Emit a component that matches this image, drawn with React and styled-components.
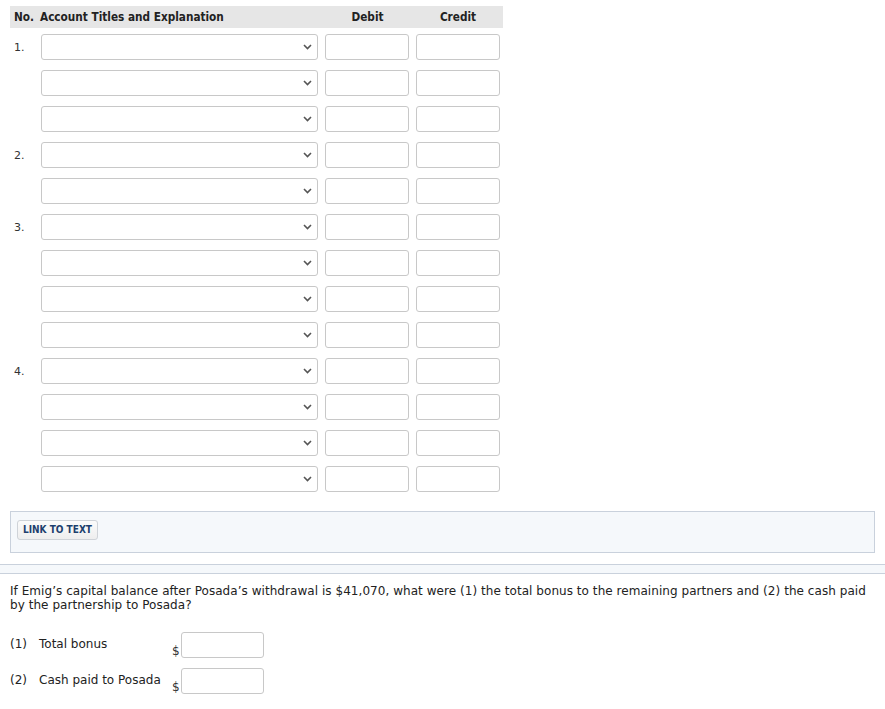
import React from 'react';
import styled, { createGlobalStyle } from 'styled-components';

const GlobalStyle = createGlobalStyle`
  body {
    margin: 0;
    background: #fff;
    font-family: "DejaVu Sans", Verdana, sans-serif;
    color: #333;
  }
`;

const Page = styled.div`
  padding-top: 6px;
`;

const Journal = styled.div`
  margin-left: 10px;
  width: 493px;
`;

const HeaderRow = styled.div`
  display: grid;
  grid-template-columns: 30px 282px 91px 90px;
  align-items: center;
  height: 22px;
  background: #e6e6e6;
  font-family: "DejaVu Sans Condensed", "DejaVu Sans", sans-serif;
  font-weight: bold;
  font-size: 11.7px;
  color: #222;
`;

const HeadCell = styled.div`
  padding-left: ${p => (p.first ? '4px' : '0')};
  text-align: ${p => (p.center ? 'center' : 'left')};
`;

const Body = styled.div`
  padding-top: 1px;
`;

const EntryRow = styled.div`
  display: grid;
  grid-template-columns: 31px 284px 91px 84px;
  height: 36px;
  align-items: start;
  padding-top: 5px;
  box-sizing: border-box;
`;

const Num = styled.div`
  font-size: 11px;
  padding-left: 4px;
  padding-top: 7px;
  color: #333;
`;

const Select = styled.div`
  height: 26px;
  width: 277px;
  box-sizing: border-box;
  border: 1px solid #c8c8c8;
  border-radius: 3px;
  background: #fff;
  display: flex;
  align-items: center;
  justify-content: flex-end;
  padding-right: 5px;
`;

const Field = styled.div`
  height: 26px;
  box-sizing: border-box;
  border: 1px solid #c8c8c8;
  border-radius: 3px;
  background: #fff;
  width: ${p => p.w || 84}px;
`;

const Panel = styled.div`
  margin: 14px 10px 0 10px;
  height: 42px;
  box-sizing: border-box;
  border: 1px solid #c9d1dc;
  background: #f5f8fb;
  padding: 6px 0 0 6px;
`;

const LinkButton = styled.div`
  display: inline-block;
  height: 20px;
  box-sizing: border-box;
  padding: 0 5px;
  line-height: 18px;
  border: 1px solid #cfd3d8;
  border-radius: 3px;
  background: linear-gradient(#fbfbfb, #eeeeee);
  font-family: "DejaVu Sans Condensed", "DejaVu Sans", sans-serif;
  font-weight: bold;
  font-size: 10px;
  color: #1d3f6e;
`;

const Divider = styled.div`
  margin-top: 11px;
  height: 10px;
  box-sizing: border-box;
  border-top: 1px solid #c9d1dc;
  border-bottom: 1px solid #c9d1dc;
  background: #f5f8fb;
`;

const Question = styled.p`
  margin: 10px 10px 0 10px;
  font-size: 12px;
  line-height: 14px;
  letter-spacing: 0.05px;
  color: #222;
`;

const Answers = styled.div`
  margin-top: 20px;
  padding-left: 10px;
`;

const AnswerRow = styled.div`
  display: flex;
  align-items: flex-start;
  height: 36px;
`;

const AnswerLabel = styled.div`
  width: 162px;
  font-size: 12px;
  padding-top: 5px;
  color: #222;
  display: flex;
  gap: 12px;
`;

const Dollar = styled.span`
  font-size: 12px;
  align-self: flex-end;
  margin-bottom: 10px;
  width: 9px;
  color: #333;
`;

const Chevron = () => (
  <svg width="9" height="6" viewBox="0 0 9 6">
    <path d="M1 1 L4.5 4.5 L8 1" fill="none" stroke="#555" strokeWidth="1.6" />
  </svg>
);

const groups = [
  { no: '1.', lines: 3 },
  { no: '2.', lines: 2 },
  { no: '3.', lines: 4 },
  { no: '4.', lines: 4 },
];

const rows = groups.flatMap(g =>
  Array.from({ length: g.lines }, (_, i) => (i === 0 ? g.no : ''))
);

export default function App() {
  return (
    <Page>
      <GlobalStyle />
      <Journal>
        <HeaderRow>
          <HeadCell first>No.</HeadCell>
          <HeadCell>Account Titles and Explanation</HeadCell>
          <HeadCell center>Debit</HeadCell>
          <HeadCell center>Credit</HeadCell>
        </HeaderRow>
        <Body>
          {rows.map((no, i) => (
            <EntryRow key={i}>
              <Num>{no}</Num>
              <Select>
                <Chevron />
              </Select>
              <Field />
              <Field />
            </EntryRow>
          ))}
        </Body>
      </Journal>

      <Panel>
        <LinkButton>LINK TO TEXT</LinkButton>
      </Panel>

      <Divider />

      <Question>
        If Emig’s capital balance after Posada’s withdrawal is $41,070, what were (1) the total bonus to the remaining partners and (2) the cash paid by the partnership to Posada?
      </Question>

      <Answers>
        <AnswerRow>
          <AnswerLabel>
            <span>(1)</span>
            <span>Total bonus</span>
          </AnswerLabel>
          <Dollar>$</Dollar>
          <Field w={83} />
        </AnswerRow>
        <AnswerRow>
          <AnswerLabel>
            <span>(2)</span>
            <span>Cash paid to Posada</span>
          </AnswerLabel>
          <Dollar>$</Dollar>
          <Field w={83} />
        </AnswerRow>
      </Answers>
    </Page>
  );
}
